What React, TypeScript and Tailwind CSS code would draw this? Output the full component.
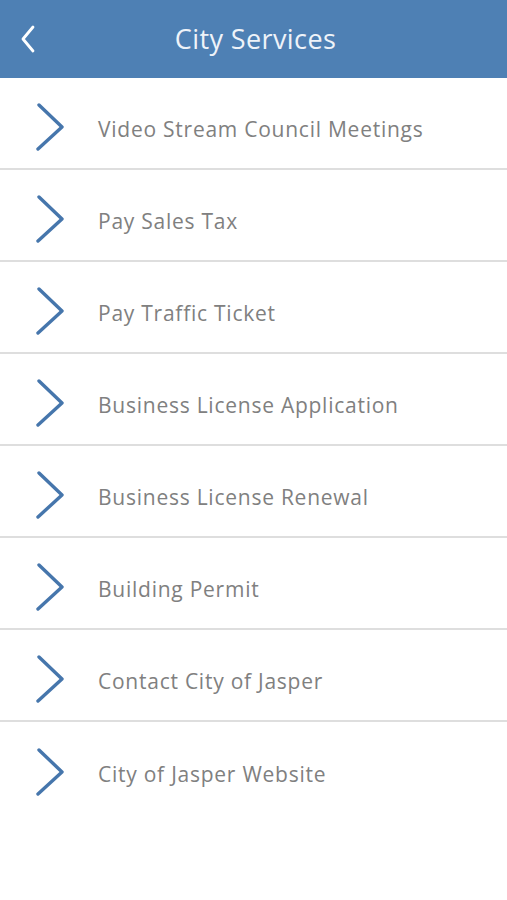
import React from "react";

const items = [
  "Video Stream Council Meetings",
  "Pay Sales Tax",
  "Pay Traffic Ticket",
  "Business License Application",
  "Business License Renewal",
  "Building Permit",
  "Contact City of Jasper",
  "City of Jasper Website",
];

function Chevron() {
  return (
    <svg width="30" height="48" viewBox="0 0 30 48" className="shrink-0">
      <polyline
        points="3,2 26,24 2,46"
        fill="none"
        stroke="#4676ac"
        strokeWidth="3.4"
        strokeLinecap="round"
        strokeLinejoin="round"
      />
    </svg>
  );
}

export default function App() {
  return (
    <div
      className="w-[507px] h-[900px] bg-white overflow-hidden"
      style={{ fontFamily: '"Open Sans", "Noto Sans", sans-serif' }}
    >
      <header className="relative h-[78px] bg-[#4e80b4] flex items-center justify-center">
        <svg
          width="16"
          height="28"
          viewBox="0 0 16 28"
          className="absolute left-[20px] top-[25px]"
        >
          <polyline
            points="13,2 3,14 13,26"
            fill="none"
            stroke="#ffffff"
            strokeWidth="2.8"
            strokeLinecap="round"
            strokeLinejoin="round"
          />
        </svg>
        <h1 className="text-[27px] font-medium text-[#eef3f9] tracking-[0.4px] ml-[4px]">
          City Services
        </h1>
      </header>
      <ul>
        {items.map((label, i) => (
          <li
            key={label}
            className={`h-[92px] flex items-center pt-2 pl-[36px] ${
              i < items.length - 1 ? "border-b-2 border-[#dedede]" : ""
            }`}
          >
            <Chevron />
            <span className="ml-[32px] text-[21px] text-[#808080] tracking-[0.75px] mt-[5px]">
              {label}
            </span>
          </li>
        ))}
      </ul>
    </div>
  );
}
